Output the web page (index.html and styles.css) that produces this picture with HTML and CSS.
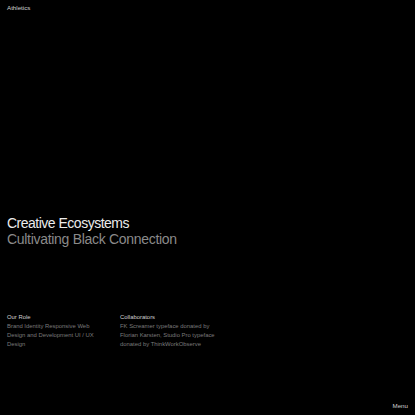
FILE: index.html
```html
<!DOCTYPE html>
<html>
<head>
<meta charset="utf-8">
<link rel="stylesheet" href="styles.css">
</head>
<body>
<div class="page">
  <header class="top"><a class="brand">Athletics</a></header>
  <main class="main">
    <h1 class="title">Creative Ecosystems<span class="sub">Cultivating Black Connection</span></h1>
    <section class="info">
      <div class="col">
        <h2 class="label">Our Role</h2>
        <p class="text">Brand Identity Responsive Web<br>Design and Development UI / UX<br>Design</p>
      </div>
      <div class="col">
        <h2 class="label">Collaborators</h2>
        <p class="text">FK Screamer typeface donated by<br>Florian Karsten, Studio Pro typeface<br>donated by ThinkWorkObserve</p>
      </div>
    </section>
  </main>
  <footer class="bottom"><a class="menu">Menu</a></footer>
</div>
</body>
</html>
```
FILE: styles.css
```css
html, body { margin: 0; padding: 0; background: #000; }
body { font-family: "Liberation Sans", Arial, sans-serif; color: #e8e8e8; }
.page { width: 415px; height: 415px; display: flex; flex-direction: column; padding: 0 7px; box-sizing: border-box; }
.top { padding-top: 4px; height: 12px; }
.brand { font-size: 6.2px; line-height: 8px; color: #d0d0d0; display: block; }
.main { flex: 1; display: flex; flex-direction: column; }
.title { margin: 199px 0 0; font-weight: 400; font-size: 14px; line-height: 16px; letter-spacing: -0.5px; color: #ececec; }
.sub { display: block; color: #8a8a8a; letter-spacing: -0.3px; }
.info { margin-top: 66px; display: grid; grid-template-columns: 113px 113px; }
.label { margin: 0; font-weight: 400; font-size: 5.9px; line-height: 9px; color: #d0d0d0; }
.text { margin: 0; font-size: 5.9px; line-height: 9px; color: #7a7a7a; }
.bottom { display: flex; justify-content: flex-end; padding-bottom: 5px; }
.menu { font-size: 6.2px; line-height: 8px; color: #d0d0d0; }
```
